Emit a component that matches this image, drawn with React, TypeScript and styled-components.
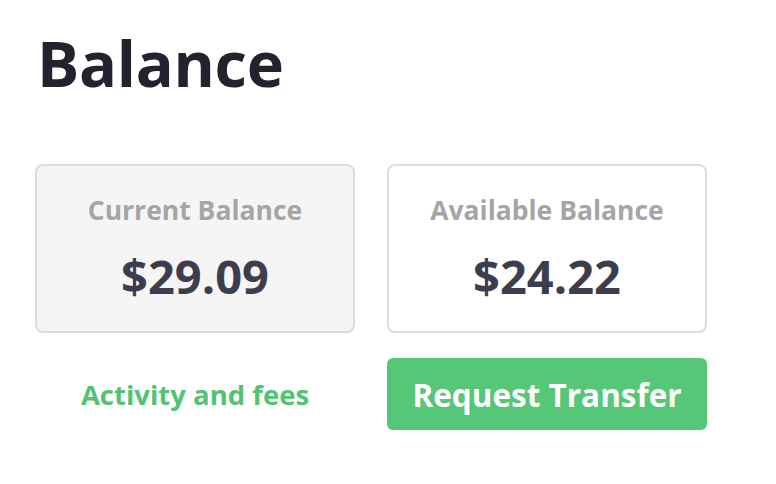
import React from "react";
import styled, { createGlobalStyle } from "styled-components";

const Global = createGlobalStyle`
  html, body { margin: 0; padding: 0; background: #ffffff; }
  body { font-family: "Open Sans", "Noto Sans", sans-serif; }
`;

const Page = styled.main`
  padding: 24px 0 0 35px;
`;

const Title = styled.h1`
  margin: 0 0 0 2px;
  font-size: 63px;
  line-height: 77px;
  font-weight: 700;
  color: #232330;
  letter-spacing: -0.3px;
`;

const Grid = styled.section`
  margin-top: 63px;
  display: grid;
  grid-template-columns: 320px 320px;
  column-gap: 32px;
  row-gap: 25px;
`;

const Card = styled.div<{ $muted?: boolean }>`
  box-sizing: border-box;
  height: 169px;
  border: 2px solid #dcdcdc;
  border-radius: 8px;
  background: ${(p) => (p.$muted ? "#f5f5f6" : "#ffffff")};
  display: flex;
  flex-direction: column;
  align-items: center;
  padding-top: 27px;
`;

const Label = styled.div`
  font-size: 26.5px;
  line-height: 34px;
  font-weight: 700;
  color: #a5a5a7;
`;

const Amount = styled.div`
  margin-top: 20px;
  font-size: 47px;
  line-height: 58px;
  font-weight: 700;
  color: #3d3d4e;
`;

const LinkCell = styled.div`
  height: 72px;
  display: flex;
  align-items: center;
  justify-content: center;
`;

const TextLink = styled.a`
  font-size: 27.5px;
  font-weight: 700;
  color: #52c273;
  text-decoration: none;
`;

const Button = styled.button`
  height: 72px;
  border: none;
  border-radius: 6px;
  background: #56c677;
  color: #ffffff;
  font-family: "Open Sans", "Noto Sans", sans-serif;
  font-size: 31.5px;
  font-weight: 700;
  cursor: pointer;
`;

export default function App() {
  return (
    <>
      <Global />
      <Page>
        <Title>Balance</Title>
        <Grid>
          <Card $muted>
            <Label>Current Balance</Label>
            <Amount>$29.09</Amount>
          </Card>
          <Card>
            <Label>Available Balance</Label>
            <Amount>$24.22</Amount>
          </Card>
          <LinkCell>
            <TextLink href="#">Activity and fees</TextLink>
          </LinkCell>
          <Button>Request Transfer</Button>
        </Grid>
      </Page>
    </>
  );
}
